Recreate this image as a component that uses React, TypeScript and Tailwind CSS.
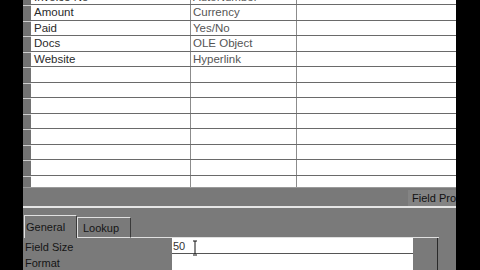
import React from 'react';

const rows = [
  { name: 'Invoice No', type: 'AutoNumber' },
  { name: 'Amount', type: 'Currency' },
  { name: 'Paid', type: 'Yes/No' },
  { name: 'Docs', type: 'OLE Object' },
  { name: 'Website', type: 'Hyperlink' },
  { name: '', type: '' },
  { name: '', type: '' },
  { name: '', type: '' },
  { name: '', type: '' },
  { name: '', type: '' },
  { name: '', type: '' },
  { name: '', type: '' },
  { name: '', type: '' },
];

const App = () => {
  return (
    <div className="w-[480px] h-[270px] bg-black flex overflow-hidden font-['Liberation_Sans',Arial,sans-serif] text-[11px] leading-none">
      <div className="w-[23px] shrink-0" />

      <div className="w-[433px] shrink-0 flex flex-col">
        {/* Table design grid */}
        <div className="h-[187px] shrink-0 overflow-hidden bg-white">
          <div className="-mt-[10.5px] flex flex-col">
            {rows.map((row, i) => (
              <div key={i} className="h-[15.5px] flex border-b border-[#6a6a6a] shrink-0">
                <div className="w-[8px] shrink-0 bg-[#727272] border-t border-[#cfcfcf]" />
                <div className="w-[160px] shrink-0 border-r border-[#8c8c8c] flex items-end pl-[3px] pb-[1px] text-[#2a2a2a] text-[11.5px]">
                  {row.name}
                </div>
                <div className="w-[106px] shrink-0 border-r border-[#8c8c8c] flex items-end pl-[2px] pb-[1px] text-[#555] text-[11.5px]">
                  {row.type}
                </div>
                <div className="flex-1" />
              </div>
            ))}
          </div>
        </div>

        {/* Field Properties band */}
        <div className="h-[19px] shrink-0 bg-[#797979] border-t border-[#9a9a9a] flex justify-end items-end">
          <div className="w-[48px] h-[16px] bg-[#848484] flex items-center pl-[4px] text-[#111] whitespace-nowrap overflow-hidden">
            Field Properties
          </div>
        </div>
        <div className="h-[2px] shrink-0 bg-[#e6e6e6]" />

        {/* Properties tabs */}
        <div className="flex-1 bg-[#7a7a7a] flex flex-col">
          <div className="h-[30px] shrink-0 flex items-end">
            <div className="w-[1px]" />
            <div className="w-[53px] h-[23px] border-t border-l border-[#e0e0e0] border-r-[#3a3a3a] border-r flex items-center pl-[1px] pt-[1px] text-[#151515]">
              General
            </div>
            <div className="w-[54px] h-[21px] border-t border-l border-b border-[#e0e0e0] border-r border-r-[#3a3a3a] flex items-center pl-[5px] pt-[2px] text-[#151515]">
              Lookup
            </div>
            <div className="w-[308px] border-b border-[#e0e0e0]" />
          </div>

          <div className="flex h-[16px] shrink-0">
            <div className="w-[149px] shrink-0 flex items-center pl-[2px] pt-[2px] text-[#151515]">Field Size</div>
            <div className="w-[241px] shrink-0 bg-white border-b border-[#555] flex items-center pl-[1px] pt-[2px] text-[#333] relative">
              50
              <svg className="absolute left-[20px] top-[2px]" width="6" height="16" viewBox="0 0 6 16">
                <path d="M3 1V14M1 15H5M1 1H5" stroke="#111" strokeWidth="1" fill="none" />
              </svg>
            </div>
            <div className="w-[25px] shrink-0 border-r border-[#2a2a2a]" />
          </div>
          <div className="flex h-[16px] shrink-0">
            <div className="w-[149px] shrink-0 flex items-center pl-[2px] pt-[3px] text-[#151515]">Format</div>
            <div className="w-[241px] shrink-0 bg-white" />
            <div className="w-[25px] shrink-0 border-r border-[#2a2a2a]" />
          </div>
        </div>
      </div>

      <div className="flex-1" />
    </div>
  );
};

export default App;
